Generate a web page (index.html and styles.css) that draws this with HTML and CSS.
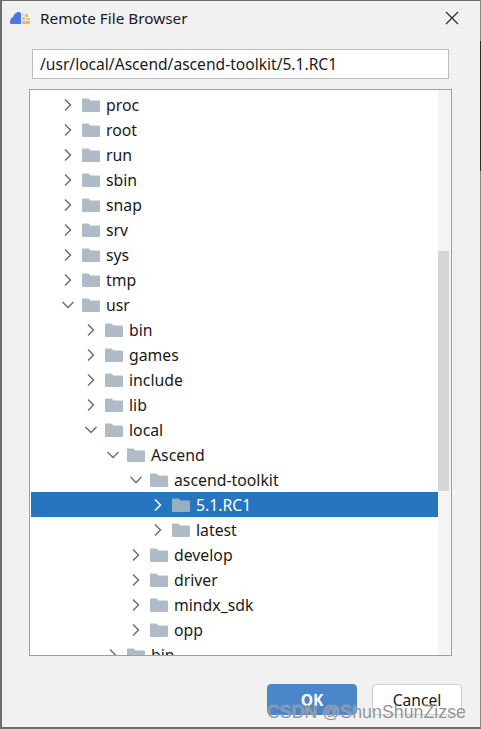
FILE: index.html
```html
<!DOCTYPE html>
<html lang="en">
<head>
    <meta charset="UTF-8">
    <meta name="viewport" content="width=device-width, initial-scale=1.0">
    <title>Remote File Browser</title>
    <link rel="stylesheet" href="styles.css">
</head>
<body>
    <svg class="defs" width="0" height="0">
        <symbol id="folder" viewBox="0 0 18 14">
            <path d="M0 1.500Q0 0.500 1 0.500H6.500L8.500 2.500H17Q18 2.500 18 3.500V13Q18 14 17 14H1Q0 14 0 13Z"/>
        </symbol>
        <symbol id="closed" viewBox="0 0 10 14">
            <path d="M2 1.500L7.500 7L2 12.500" fill="none" stroke-width="1.500"/>
        </symbol>
        <symbol id="open" viewBox="0 0 14 10">
            <path d="M1.500 2L7 7.500L12.500 2" fill="none" stroke-width="1.500"/>
        </symbol>
    </svg>

    <div class="dialog">
        <div class="titlebar">
            <svg class="app-icon" width="22" height="14" viewBox="0 0 22 14">
                <path d="M0 12Q0 7 3 6Q5 1 9 1Q11 1 11 3V13H1Q0 13 0 12Z" fill="#4a78e0"/>
                <rect x="12" y="2" width="2" height="3" fill="#f3d9b0"/>
                <rect x="15" y="3" width="3" height="3" fill="#eeb868"/>
                <rect x="12" y="6" width="3" height="3" fill="#cfc9a0"/>
                <rect x="16" y="7" width="4" height="2" fill="#f0c080"/>
                <rect x="12" y="10" width="8" height="3" fill="#eeb868"/>
            </svg>
            <span class="title">Remote File Browser</span>
            <svg class="close" width="14" height="14" viewBox="0 0 14 14">
                <path d="M1 1L13 13M13 1L1 13" stroke="#2b2b2b" stroke-width="1.200"/>
            </svg>
        </div>

        <div class="path-input">/usr/local/Ascend/ascend-toolkit/5.1.RC1</div>

        <div class="tree">
            <div class="rows">
                <div class="row l0"><svg class="arrow"><use href="#closed"/></svg><svg class="folder"><use href="#folder"/></svg><span>proc</span></div>
                <div class="row l0"><svg class="arrow"><use href="#closed"/></svg><svg class="folder"><use href="#folder"/></svg><span>root</span></div>
                <div class="row l0"><svg class="arrow"><use href="#closed"/></svg><svg class="folder"><use href="#folder"/></svg><span>run</span></div>
                <div class="row l0"><svg class="arrow"><use href="#closed"/></svg><svg class="folder"><use href="#folder"/></svg><span>sbin</span></div>
                <div class="row l0"><svg class="arrow"><use href="#closed"/></svg><svg class="folder"><use href="#folder"/></svg><span>snap</span></div>
                <div class="row l0"><svg class="arrow"><use href="#closed"/></svg><svg class="folder"><use href="#folder"/></svg><span>srv</span></div>
                <div class="row l0"><svg class="arrow"><use href="#closed"/></svg><svg class="folder"><use href="#folder"/></svg><span>sys</span></div>
                <div class="row l0"><svg class="arrow"><use href="#closed"/></svg><svg class="folder"><use href="#folder"/></svg><span>tmp</span></div>
                <div class="row l0"><svg class="arrow"><use href="#open"/></svg><svg class="folder"><use href="#folder"/></svg><span>usr</span></div>
                <div class="row l1"><svg class="arrow"><use href="#closed"/></svg><svg class="folder"><use href="#folder"/></svg><span>bin</span></div>
                <div class="row l1"><svg class="arrow"><use href="#closed"/></svg><svg class="folder"><use href="#folder"/></svg><span>games</span></div>
                <div class="row l1"><svg class="arrow"><use href="#closed"/></svg><svg class="folder"><use href="#folder"/></svg><span>include</span></div>
                <div class="row l1"><svg class="arrow"><use href="#closed"/></svg><svg class="folder"><use href="#folder"/></svg><span>lib</span></div>
                <div class="row l1"><svg class="arrow"><use href="#open"/></svg><svg class="folder"><use href="#folder"/></svg><span>local</span></div>
                <div class="row l2"><svg class="arrow"><use href="#open"/></svg><svg class="folder"><use href="#folder"/></svg><span>Ascend</span></div>
                <div class="row l3"><svg class="arrow"><use href="#open"/></svg><svg class="folder"><use href="#folder"/></svg><span>ascend-toolkit</span></div>
                <div class="row l4 selected"><svg class="arrow"><use href="#closed"/></svg><svg class="folder"><use href="#folder"/></svg><span>5.1.RC1</span></div>
                <div class="row l4"><svg class="arrow"><use href="#closed"/></svg><svg class="folder"><use href="#folder"/></svg><span>latest</span></div>
                <div class="row l3"><svg class="arrow"><use href="#closed"/></svg><svg class="folder"><use href="#folder"/></svg><span>develop</span></div>
                <div class="row l3"><svg class="arrow"><use href="#closed"/></svg><svg class="folder"><use href="#folder"/></svg><span>driver</span></div>
                <div class="row l3"><svg class="arrow"><use href="#closed"/></svg><svg class="folder"><use href="#folder"/></svg><span>mindx_sdk</span></div>
                <div class="row l3"><svg class="arrow"><use href="#closed"/></svg><svg class="folder"><use href="#folder"/></svg><span>opp</span></div>
                <div class="row l2"><svg class="arrow"><use href="#closed"/></svg><svg class="folder"><use href="#folder"/></svg><span>bin</span></div>
            </div>
            <div class="scrollbar"><div class="thumb"></div></div>
        </div>

        <div class="footer">
            <button class="button primary">OK</button>
            <button class="button">Cancel</button>
        </div>

        <div class="edge"></div>
        <div class="watermark">CSDN @ShunShunZizse</div>
    </div>
</body>
</html>
```

FILE: styles.css
```css
* {
    box-sizing: border-box;
}
body {
    margin: 0;
    width: 481px;
    height: 729px;
    overflow: hidden;
    font-family: "Noto Sans", Arial, sans-serif;
    color: #1a1a1a;
}
.defs {
    display: block;
    height: 0;
}
.dialog {
    position: relative;
    width: 481px;
    height: 729px;
    display: flex;
    flex-direction: column;
    background-color: #f1f1f1;
    border-top: 1px solid #6d6d6d;
    border-left: 2px solid #6d6d6d;
    border-right: 1px solid #8a8a8a;
    border-bottom: 2px solid #6d6d6d;
}
.titlebar {
    height: 49px;
    flex: none;
    display: flex;
    align-items: center;
    padding: 0 21px 13px 8px;
    margin-top: -1px;
}
.app-icon {
    flex: none;
}
.title {
    margin-left: 8px;
    font-size: 15.3px;
    flex: 1;
}
.path-input {
    flex: none;
    height: 30px;
    margin-left: 30px;
    width: 417px;
    padding-left: 7px;
    line-height: 28px;
    font-size: 15.6px;
    background-color: #fff;
    border: 1px solid #bdbdbd;
}
.tree {
    flex: none;
    display: flex;
    height: 567px;
    width: 423px;
    margin: 10px 0 0 27px;
    background-color: #fff;
    border: 1px solid #9e9e9e;
}
.rows {
    flex: 1;
    margin-left: 1px;
    padding-top: 2px;
    overflow: hidden;
}
.row {
    height: 25px;
    display: flex;
    align-items: center;
    font-size: 15.8px;
}
.l0 { padding-left: 30px; }
.l1 { padding-left: 53px; }
.l2 { padding-left: 75px; }
.l3 { padding-left: 98px; }
.l4 { padding-left: 120px; }
.arrow {
    width: 14px;
    height: 14px;
    flex: none;
    margin-right: 7px;
    stroke: #6f6f6f;
}
.folder {
    width: 18px;
    height: 14px;
    flex: none;
    margin-right: 6px;
    fill: #afbbc6;
}
.selected {
    background-color: #2675bf;
    color: #fff;
}
.selected .arrow {
    stroke: #fff;
}
.selected .folder {
    fill: #9aaec2;
}
.scrollbar {
    flex: none;
    width: 13px;
    background-color: #f4f4f4;
    padding-top: 161px;
}
.thumb {
    width: 11px;
    height: 240px;
    background-color: #d6d6d6;
}
.footer {
    flex: 1;
    display: flex;
    justify-content: flex-end;
    gap: 15px;
    padding: 28px 18px 0 0;
}
.button {
    width: 90px;
    height: 31px;
    padding: 0;
    font-family: inherit;
    font-size: 15.6px;
    color: #1a1a1a;
    background-color: #fff;
    border: 1px solid #cfcfcf;
    border-radius: 4px;
}
.button.primary {
    color: #fff;
    font-weight: 700;
    background-color: #4a86c8;
    border-color: #4a86c8;
}
.edge {
    position: absolute;
    right: -1px;
    top: 40px;
    width: 1px;
    height: 130px;
    background-color: #2a2a2a;
}
.watermark {
    position: absolute;
    left: 265px;
    top: 701px;
    font-family: "Liberation Sans", Arial, sans-serif;
    font-size: 17.8px;
    color: rgba(110, 110, 110, 0.75);
    text-shadow: 0 0 1px #fff;
}
```
